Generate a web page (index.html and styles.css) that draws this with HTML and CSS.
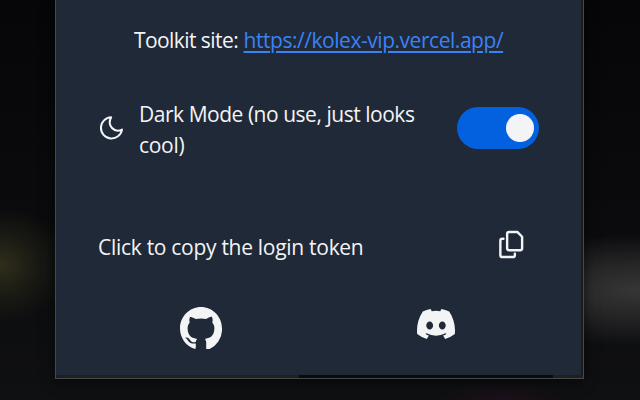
FILE: index.html
```html
<!DOCTYPE html>
<html lang="en">
<head>
<meta charset="utf-8">
<title>Toolkit</title>
<link rel="stylesheet" href="styles.css">
</head>
<body>
<main class="popup">
  <div class="content">
    <p class="site"><span class="site-label">Toolkit site:</span> <a class="site-link" href="#">https://kolex-vip.vercel.app/</a></p>
    <div class="mode">
      <svg class="moon" viewBox="0 0 28 28" fill="none" stroke="currentColor" stroke-width="2" stroke-linecap="round" stroke-linejoin="round"><path d="M14.2 3.3A10.6 10.6 0 1 0 25 15.6C17.5 19.5 9.5 11.5 14.2 3.3Z"/></svg>
      <p class="mode-label"><span class="line-one">Dark Mode (no use, just looks</span><br><span class="line-two">cool)</span></p>
      <div class="toggle"><span class="knob"></span></div>
    </div>
    <div class="token">
      <span class="token-label">Click to copy the login token</span>
      <svg class="copy" viewBox="0 0 26 30" fill="none" stroke="currentColor" stroke-width="2.5" stroke-linejoin="round" stroke-linecap="round"><path d="M11 2h8.5l5 5v12a2 2 0 0 1-2 2H11a2 2 0 0 1-2-2V4a2 2 0 0 1 2-2ZM5.2 9H4a2 2 0 0 0-2 2v15a2 2 0 0 0 2 2h11a2 2 0 0 0 2-2v-1.5"/></svg>
    </div>
    <div class="social">
      <svg class="github" viewBox="0 0 16 15.7" preserveAspectRatio="none" fill="currentColor"><path d="M8 0C3.58 0 0 3.58 0 8c0 3.54 2.29 6.53 5.47 7.59.4.07.55-.17.55-.38V13.6C3.8 14 3.3 12.8 2.8 12.2c-.28-.35-.5-.42-.8-.7.9-.3 1.5.3 1.9.9.55.85 1.4.95 2.13.6.07-.52.28-.87.51-1.07-1.78-.2-3.64-.89-3.64-3.95 0-.87.31-1.59.82-2.15-.08-.2-.36-1.02.08-2.12 0 0 .67-.21 2.2.82.64-.18 1.32-.27 2-.27s1.36.09 2 .27c1.53-1.04 2.2-.82 2.2-.82.44 1.1.16 1.92.08 2.12.51.56.82 1.27.82 2.15 0 3.07-1.87 3.75-3.65 3.95.29.25.54.73.54 1.48 0 1.07-.01 1.93-.01 2.2 0 .21.15.46.55.38A8.01 8.01 0 0 0 16 8c0-4.42-3.58-8-8-8Z"/></svg>
      <svg class="discord" viewBox="0 0 127.14 96.36" preserveAspectRatio="none" fill="currentColor"><path d="M107.7 8.07A105.15 105.15 0 0 0 81.47 0a72.06 72.06 0 0 0-3.36 6.83 97.68 97.68 0 0 0-29.11 0A72.37 72.37 0 0 0 45.64 0a105.89 105.89 0 0 0-26.25 8.09C2.79 32.65-1.71 56.6.54 80.21a105.73 105.73 0 0 0 32.17 16.15 77.7 77.7 0 0 0 6.89-11.11 68.42 68.42 0 0 1-10.85-5.18c.91-.66 1.8-1.34 2.66-2a75.57 75.57 0 0 0 64.32 0c.87.71 1.76 1.39 2.66 2a68.68 68.68 0 0 1-10.87 5.19 77 77 0 0 0 6.89 11.1 105.25 105.25 0 0 0 32.19-16.14c2.64-27.38-4.51-51.11-18.9-72.15ZM42.45 65.69C36.18 65.69 31 60 31 53s5-12.74 11.43-12.74S54 46 53.89 53s-5.05 12.69-11.44 12.69Zm42.24 0C78.41 65.69 73.25 60 73.25 53s5-12.74 11.44-12.74S96.23 46 96.12 53s-5.04 12.69-11.43 12.69Z"/></svg>
    </div>
  </div>
  <div class="scroll-track"><span class="scroll-thumb"></span></div>
</main>
</body>
</html>
```
FILE: styles.css
```css
* { box-sizing: border-box; }
body {
  margin: 0;
  width: 640px;
  height: 400px;
  overflow: hidden;
  color: #f3f4f6;
  font: 450 21px/31px "Open Sans", "Noto Sans", sans-serif;
  background:
    radial-gradient(ellipse 68px 58px at 0 265px, #302e1b, #25241888 55%, transparent),
    radial-gradient(ellipse 180px 56px at 640px 290px, #363637, #2c2c2dcc 45%, transparent),
    radial-gradient(ellipse 65px 18px at 500px 400px, #1c101a, transparent),
    linear-gradient(#060608, #0b0b0d 55%, #0f1012);
}
p { margin: 0; }
svg { display: block; flex: none; }
.popup {
  width: 529px;
  height: 379px;
  margin-left: 55px;
  border: 1px solid #484848;
  border-top: 0;
  background: #1b1b1b;
  box-shadow: 0 2px 12px #00000099;
}
.content {
  width: 525px;
  height: 375px;
  padding: 25px 42px 0;
  background: #202937;
}
.site { padding-left: 36px; white-space: nowrap; }
.site-label { letter-spacing: -0.57px; }
.site-link { letter-spacing: -0.46px; color: #3b82f6; text-decoration-thickness: 2px; text-underline-offset: 3px; }
.mode { display: flex; align-items: center; margin-top: 43px; height: 62px; }
.moon { width: 28px; height: 28px; margin: -4px 0 0 -1px; }
.mode-label { margin-left: 14px; width: 318px; white-space: nowrap; }
.line-one { letter-spacing: -0.47px; }
.line-two { letter-spacing: -0.3px; }
.toggle {
  width: 82px;
  height: 42px;
  padding: 7px 5px;
  display: flex;
  justify-content: flex-end;
  border-radius: 21px;
  background: #0361df;
  margin-top: -4px;
}
.knob { width: 28px; height: 28px; border-radius: 50%; background: #f3f4f6; }
.token { display: flex; justify-content: space-between; margin-top: 70px; height: 33px; padding-right: 15px; }
.token-label { padding-top: 1px; letter-spacing: -0.29px; }
.copy { width: 26px; height: 29px; margin-top: -1px; }
.social { display: flex; margin-top: 43px; padding-left: 82px; }
.github { width: 42px; height: 42px; }
.discord { width: 38px; height: 30px; margin: 2px 0 0 195px; }
.scroll-track { height: 3px; padding-left: 243px; background: #202020; }
.scroll-thumb { display: block; width: 254px; height: 3px; background: #0b0b0d; }
```
